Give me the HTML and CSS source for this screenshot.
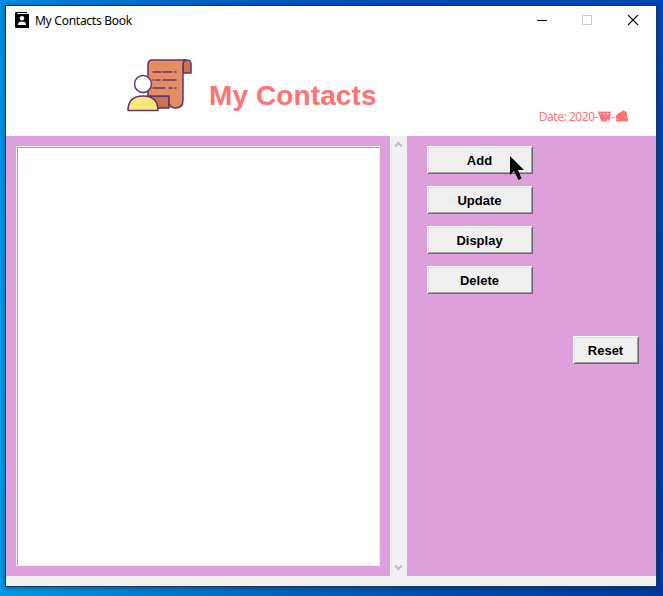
FILE: index.html
```html
<!DOCTYPE html>
<html lang="en">
<head>
<meta charset="utf-8">
<title>My Contacts Book</title>
<link rel="stylesheet" href="styles.css">
</head>
<body>
<main class="window">
  <div class="titlebar">
    <svg class="app-icon" width="14" height="16" viewBox="0 0 14 16">
      <path d="M1 0h11v1H2v1h12v14H1.500Q0 16 0 14.500V1.500Q0 0 1 0Z" fill="#000"/>
      <circle cx="7" cy="6.200" r="2.200" fill="#fff"/>
      <path d="M3 13v-1.500Q3.500 9.500 7 9.500t4 2V13Z" fill="#fff"/>
    </svg>
    <span class="caption">My Contacts Book</span>
    <svg class="controls" width="102" height="12" viewBox="0 0 102 12" fill="none" shape-rendering="crispEdges">
      <path d="M0 5.500h10" stroke="#000"/>
      <rect x="45.500" y=".5" width="9" height="9" stroke="#ccc"/>
      <path d="M91 0l10 10M101 0L91 10" stroke="#000" shape-rendering="auto" stroke-width="1.100"/>
    </svg>
  </div>
  <header class="header">
    <svg class="logo" width="66" height="54" viewBox="0 0 66 54" stroke="#64326e" stroke-width="1.500" stroke-linejoin="round" stroke-linecap="round">
      <path d="M57 2h3q4 0 4 4v9h-8V6Z" fill="#c8744d"/>
      <path d="M20 38h22v12H20Z" fill="#c8744d"/>
      <path d="M25 2H59q-3 1-3 5V42q0 8-7.500 8T42 42v-4H21V7q0-5 4-5Z" fill="#e28e62"/>
      <path d="M26 14h8M36 14h9M48 14h1M26 22h1M29 22h4M36 22h13M26 30h12M42 30h3M48 30h1" stroke-width="1.500" fill="none"/>
      <circle cx="16" cy="26" r="8.500" fill="#fff"/>
      <path d="M1 52.500q0-14.500 15-14.500t15 14.500Z" fill="#f7e779"/>
    </svg>
    <h1 class="heading">My Contacts</h1>
    <div class="date"><span class="date-text">Date: 2020-</span>
      <svg width="31" height="15" viewBox="0 0 31 15" stroke="#ff7373" fill="none" stroke-linecap="round" stroke-linejoin="round">
        <path d="M1 3l3 9 0-9 2 9 2-9 0 9 4-9-1 8M1 3.500l11 0M3 6.500l8-.5M3 9l8 0" stroke-width="1.600"/>
        <path d="M14 8.500h2" stroke-width="1"/>
        <path d="M18.500 7.500l5-4-3 8 5-9-1 9 3-8 1 7M19 9.500l10 .5M21 5l6-1.500M19 11.500h10M20 7.500h8" stroke-width="2.200"/>
      </svg>
    </div>
  </header>
  <div class="body">
    <section class="list-pane"><div class="listbox"></div></section>
    <div class="scrollbar">
      <svg width="9" height="7" viewBox="0 0 9 7"><path d="M1 5.500l3.500-3.500L8 5.500" stroke="#bfbfbf" stroke-width="2" fill="none"/></svg>
      <svg width="9" height="7" viewBox="0 0 9 7"><path d="M1 1.500l3.500 3.500L8 1.500" stroke="#bfbfbf" stroke-width="2" fill="none"/></svg>
    </div>
    <section class="actions">
      <button class="button">Add</button>
      <button class="button">Update</button>
      <button class="button">Display</button>
      <button class="button">Delete</button>
      <button class="button reset">Reset</button>
    </section>
  </div>
</main>
<svg class="cursor" width="16" height="26" viewBox="0 0 16 26"><path d="M0 0V19l4-4 4.500 9 3-1.500L8 14h6Z" fill="#000"/></svg>
</body>
</html>
```

FILE: styles.css
```css
* { box-sizing: border-box; }

body {
  margin: 0;
  height: 596px;
  padding: 5px 6px 9px 5px;
  overflow: hidden;
  background:
    linear-gradient(90deg, #0099e6 0, #0087d8 90px, #0064bd 280px, #004bae 450px, #003a9f 663px) 0 100% / 100% 10px no-repeat,
    linear-gradient(90deg, #008ce0 0, #0078d9 80px, #0057c4 260px, #0047b8 450px, #0046b8 663px) 0 0 / 100% 6px no-repeat,
    linear-gradient(180deg, #008ce0, #00a0eb 60%, #0099e6) 0 0 / 6px 100% no-repeat,
    linear-gradient(180deg, #0046b8, #003a9f);
  font-family: "Liberation Sans", Arial, sans-serif;
}

.window {
  display: flex;
  flex-direction: column;
  width: 652px;
  height: 582px;
  border: 1px solid #183860;
  background: #f0f0f0;
  box-shadow: 0 1px 5px rgba(0, 0, 0, .35);
}

.titlebar {
  display: flex;
  align-items: center;
  height: 29px;
  padding: 0 17px 0 9px;
  background: #fff;
}

.app-icon { margin-top: -1px; }

.caption {
  margin-left: 6px;
  font: 12px "Noto Sans", sans-serif;
  letter-spacing: -.26px;
  color: #000;
}

.controls { margin-left: auto; }

.header {
  display: flex;
  height: 101px;
  padding-left: 121px;
  background: #fff;
  color: #ff7373;
}

.logo { margin-top: 23px; }

.heading {
  margin: 44px 0 0 16px;
  font-size: 28px;
  line-height: 34px;
  letter-spacing: .1px;
  white-space: nowrap;
}

.date {
  display: flex;
  align-items: center;
  height: 16px;
  margin: 73px 27px 0 auto;
  font: 12px "Noto Sans", sans-serif;
  letter-spacing: -.45px;
  white-space: nowrap;
}

.body {
  display: flex;
  height: 440px;
  background: #dda0dd;
}

.list-pane { width: 384px; padding: 10px; }

.listbox {
  height: 420px;
  border: 1px solid #f0f0f0;
  background: #fff;
  box-shadow: inset 1px 1px #a0a0a0, inset -1px -1px #fff;
}

.scrollbar {
  display: flex;
  flex-direction: column;
  justify-content: space-between;
  align-items: center;
  width: 17px;
  padding: 5px 2px 5px 0;
  border-left: 1px solid #fff;
  background: #f0f0f0;
}

.actions {
  display: flex;
  flex: 1;
  flex-direction: column;
  align-items: flex-start;
  gap: 12px;
  padding: 10px 17px 0 20px;
}

.button {
  width: 106px;
  height: 28px;
  padding: 0 1px 0 0;
  border: 1px solid;
  border-color: #fff #696969 #696969 #fff;
  background: #f0f0f0;
  box-shadow: inset 1px 1px #e3e3e3, inset -1px -1px #a0a0a0;
  color: #000;
  font: bold 13px "Liberation Sans", Arial, sans-serif;
}

.reset {
  align-self: flex-end;
  width: 66px;
  margin-top: 30px;
}

.cursor {
  position: absolute;
  left: 510px;
  top: 156px;
}
```
